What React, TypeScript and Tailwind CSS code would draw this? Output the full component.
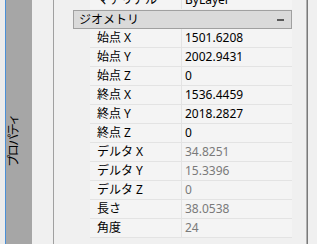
import { FC, ReactElement } from "react";

type Row = { label: string; value: string; muted?: boolean };

const rows: Row[] = [
  { label: "始点 X", value: "1501.6208" },
  { label: "始点 Y", value: "2002.9431" },
  { label: "始点 Z", value: "0" },
  { label: "終点 X", value: "1536.4459" },
  { label: "終点 Y", value: "2018.2827" },
  { label: "終点 Z", value: "0" },
  { label: "デルタ X", value: "34.8251", muted: true },
  { label: "デルタ Y", value: "15.3396", muted: true },
  { label: "デルタ Z", value: "0", muted: true },
  { label: "長さ", value: "38.0538", muted: true },
  { label: "角度", value: "24", muted: true },
];

const PropRow: FC<Row> = ({ label, value, muted }): ReactElement => (
  <div className="ml-[36px] flex h-[19px] w-[202px] border-b border-[#e3e3e3] bg-[#f4f4f4]">
    <div className="flex w-[91px] items-center pl-[7px] text-black">{label}</div>
    <div className={`flex flex-1 items-center border-l border-[#e3e3e3] pl-[3px] ${muted ? "text-[#7a7a7a]" : "text-black"}`}>
      {value}
    </div>
  </div>
);

export default function App(): ReactElement {
  return (
    <div
      className="flex h-[244px] w-[317px] overflow-hidden bg-[#f0f0f0] text-[12px] leading-none"
      style={{ fontFamily: '"Noto Sans", "Noto Sans CJK JP", sans-serif' }}
    >
      <div className="w-[5px] bg-[#ebebeb]" />
      <div className="w-px bg-[#4a8fd6]" />
      <div className="flex w-[26px] items-start bg-[#a6a6a6] pl-[2px] pt-[115px]">
        <span className="rotate-180 text-[12px] tracking-[-1.5px] text-black [text-orientation:sideways] [writing-mode:vertical-rl]">
          プロパティ
        </span>
      </div>
      <div className="w-[21px]" />
      <div className="w-px bg-[#a0a0a0]" />

      <div className="flex w-[252px] flex-col">
        <div className="-mt-[10px] mb-px ml-[36px] flex h-[19px] w-[202px] bg-[#f4f4f4]">
          <div className="flex w-[91px] items-center pl-[7px]">マテリアル</div>
          <div className="flex flex-1 items-center border-l border-[#e3e3e3] pl-[3px]">ByLayer</div>
        </div>

        <div className="ml-[19px] flex h-[19px] w-[219px] items-center justify-between border border-[#a0a0a0] bg-[#dadada] pl-[5px] pr-[7px]">
          <span className="text-black">ジオメトリ</span>
          <span className="h-[2px] w-[7px] bg-[#5a5a5a]" />
        </div>

        {rows.map((r) => (
          <PropRow key={r.label} {...r} />
        ))}
      </div>

      <div className="w-px bg-[#b0b0b0]" />
      <div className="w-px bg-[#7a7a7a]" />
      <div className="w-[9px]" />
    </div>
  );
}
